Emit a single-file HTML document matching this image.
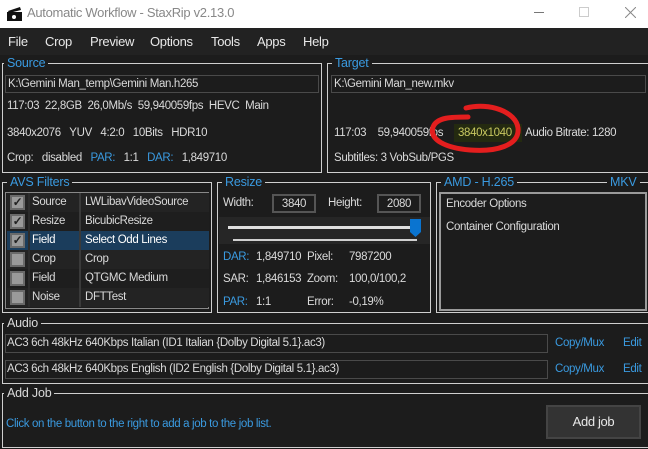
<!DOCTYPE html>
<html><head><meta charset="utf-8"><style>
*{box-sizing:border-box;margin:0;padding:0}
body{width:648px;height:449px;overflow:hidden;background:#1c1c1c;font-family:"Liberation Sans",sans-serif;font-size:11.5px;letter-spacing:-0.35px;color:#dadada;position:relative}
.a{position:absolute;white-space:nowrap}
.b{color:#3a9ae0}
.g{position:absolute;border:1px solid #cfcfcf}
.gt{position:absolute;top:-9px;left:4px;background:#1c1c1c;padding:0 3px;color:#3a9ae0;font-size:12.5px;line-height:16px;letter-spacing:-0.2px}
.tb{position:absolute;border:1px solid #4a4a4a;background:#1c1c1c;padding-left:2px;line-height:16px}
.row{position:absolute;left:1px;width:202px;height:19px;background:#232323}
.cb{position:absolute;left:3px;top:2px;width:15px;height:15px;background:#9a9a9a;border:2px solid #6a6a6a;color:#222;font-size:12px;line-height:11px;text-align:center;font-weight:bold}
.m{position:absolute;top:34px;font-size:13px;color:#e8e8e8;letter-spacing:-0.3px}
</style></head><body>
<div class="a" style="left:0;top:0;width:648px;height:28px;background:#fff"></div>
<svg class="a" style="left:7px;top:7px" width="16" height="14"><rect x="0" y="5" width="15" height="9" fill="#111"/><path d="M1 4 L13 0 L14 3 L2 6Z" fill="#111"/><circle cx="7" cy="10" r="2" fill="#fff"/></svg>
<div class="a" style="left:27px;top:5px;color:#888;font-size:13px;letter-spacing:-0.3px">Automatic Workflow - StaxRip v2.13.0</div>
<div class="a" style="left:534px;top:12px;width:10px;height:1px;background:#777"></div>
<div class="a" style="left:579px;top:7px;width:10px;height:10px;border:1px solid #ccc"></div>
<svg class="a" style="left:625px;top:7px" width="11" height="11"><path d="M0 0L11 11M11 0L0 11" stroke="#888" stroke-width="1"/></svg>
<div class="a" style="left:0;top:28px;width:648px;height:27px;background:#222"></div>
<div class="m" style="left:8px">File</div>
<div class="m" style="left:45px">Crop</div>
<div class="m" style="left:90px">Preview</div>
<div class="m" style="left:150px">Options</div>
<div class="m" style="left:211px">Tools</div>
<div class="m" style="left:257px">Apps</div>
<div class="m" style="left:303px">Help</div>

<div class="g" style="left:2px;top:63px;width:320px;height:110px"><div class="gt" style="left:1px">Source</div>
<div class="tb" style="left:2px;top:11px;width:314px;height:18px">K:\Gemini Man_temp\Gemini Man.h265</div>
<div class="a" style="left:4px;top:36px">117:03 &nbsp;22,8GB &nbsp;26,0Mb/s &nbsp;59,940059fps &nbsp;HEVC &nbsp;Main</div>
<div class="a" style="left:4px;top:63px">3840x2076 &nbsp;&nbsp;YUV &nbsp;&nbsp;4:2:0 &nbsp;&nbsp;10Bits &nbsp;&nbsp;HDR10</div>
<div class="a" style="left:4px;top:88px">Crop: &nbsp;&nbsp;disabled &nbsp;&nbsp;<span class="b">PAR:</span> &nbsp;&nbsp;1:1 &nbsp;&nbsp;<span class="b">DAR:</span> &nbsp;&nbsp;1,849710</div>
</div>

<div class="g" style="left:327px;top:63px;width:330px;height:110px"><div class="gt">Target</div>
<div class="tb" style="left:3px;top:11px;width:315px;height:18px">K:\Gemini Man_new.mkv</div>
<div class="a" style="left:6px;top:63px">117:03 &nbsp;&nbsp;&nbsp;59,940059fps</div>
<div class="a" style="left:126px;top:60px;width:68px;height:18px;background:#242a10"></div>
<div class="a" style="left:130px;top:63px;color:#c8c860">3840x1040</div>
<div class="a" style="left:197px;top:63px">Audio Bitrate: 1280</div>
<div class="a" style="left:6px;top:88px">Subtitles: 3 VobSub/PGS</div>
</div>
<svg class="a" style="left:0;top:0" width="648" height="200"><path d="M466 108 C490 102 516 112 518 128 C520 146 495 152 470 150 C446 148 429 140 433 127 C437 117 452 117 468 117" fill="none" stroke="#e41e1e" stroke-width="5" stroke-linecap="round"/></svg>

<div class="g" style="left:2px;top:182px;width:210px;height:131px"><div class="gt">AVS Filters</div>
<div class="a" style="left:2px;top:9px;width:204px;height:117px;border:1px solid #888;background:#1e1e1e">
<div class="row" style="top:0"><div class="cb">✓</div><span class="a" style="left:25px;top:3px">Source</span><span class="a" style="left:78px;top:3px">LWLibavVideoSource</span></div>
<div class="row" style="top:19px;background:#1e1e1e"><div class="cb">✓</div><span class="a" style="left:25px;top:3px">Resize</span><span class="a" style="left:78px;top:3px">BicubicResize</span></div>
<div class="row" style="top:38px;background:#1b3d5c"><div class="cb">✓</div><span class="a" style="left:25px;top:3px;color:#fff">Field</span><span class="a" style="left:78px;top:3px;color:#fff">Select Odd Lines</span></div>
<div class="row" style="top:57px"><div class="cb"></div><span class="a" style="left:25px;top:3px">Crop</span><span class="a" style="left:78px;top:3px">Crop</span></div>
<div class="row" style="top:76px;background:#1e1e1e"><div class="cb"></div><span class="a" style="left:25px;top:3px">Field</span><span class="a" style="left:78px;top:3px">QTGMC Medium</span></div>
<div class="row" style="top:95px"><div class="cb"></div><span class="a" style="left:25px;top:3px">Noise</span><span class="a" style="left:78px;top:3px">DFTTest</span></div>
<div class="a" style="left:73px;top:0;width:2px;height:114px;background:#3a3a3a"></div>
<div class="a" style="left:22px;top:0;width:2px;height:114px;background:#2c2c2c"></div>
</div></div>

<div class="g" style="left:217px;top:182px;width:214px;height:131px"><div class="gt">Resize</div>
<div class="a" style="left:5px;top:14px">Width:</div>
<div class="tb" style="left:54px;top:11px;width:44px;height:19px;border:2px solid #555;text-align:center;padding:0">3840</div>
<div class="a" style="left:110px;top:14px">Height:</div>
<div class="tb" style="left:159px;top:11px;width:44px;height:19px;border:2px solid #555;text-align:center;padding:0">2080</div>
<div class="a" style="left:1px;top:34px;width:211px;height:27px;background:#262626"></div>
<div class="a" style="left:10px;top:43px;width:190px;height:3px;background:#e0e0e0"></div>
<div class="a" style="left:15px;top:56px;width:184px;height:2px;background:#d0d0d0"></div>
<svg class="a" style="left:192px;top:36px" width="12" height="19"><path d="M0 0H11V13L5.5 18L0 13Z" fill="#0a74d0"/></svg>
<div class="a b" style="left:5px;top:68px">DAR:</div><div class="a" style="left:38px;top:68px">1,849710</div><div class="a" style="left:89px;top:68px">Pixel:</div><div class="a" style="left:131px;top:68px">7987200</div>
<div class="a" style="left:5px;top:90px">SAR:</div><div class="a" style="left:38px;top:90px">1,846153</div><div class="a" style="left:89px;top:90px">Zoom:</div><div class="a" style="left:131px;top:90px">100,0/100,2</div>
<div class="a b" style="left:5px;top:113px">PAR:</div><div class="a" style="left:38px;top:113px">1:1</div><div class="a" style="left:89px;top:113px">Error:</div><div class="a" style="left:131px;top:113px">-0,19%</div>
</div>

<div class="g" style="left:436px;top:182px;width:220px;height:131px"><div class="gt">AMD - H.265</div>
<div class="gt" style="left:170px">MKV</div>
<div class="a" style="left:2px;top:9px;width:208px;height:119px;border:2px solid #9a9a9a"></div>
<div class="a" style="left:9px;top:15px">Encoder Options</div>
<div class="a" style="left:9px;top:38px">Container Configuration</div>
</div>

<div class="g" style="left:2px;top:323px;width:660px;height:61px;border-right:none"><div class="gt" style="left:1px;color:#dadada">Audio</div>
<div class="tb" style="left:2px;top:10px;width:543px;height:19px;padding-left:1px">AC3 6ch 48kHz 640Kbps Italian (ID1 Italian {Dolby Digital 5.1}.ac3)</div>
<div class="a b" style="left:552px;top:13px">Copy/Mux</div><div class="a b" style="left:620px;top:13px">Edit</div>
<div class="tb" style="left:2px;top:36px;width:543px;height:19px;padding-left:1px">AC3 6ch 48kHz 640Kbps English (ID2 English {Dolby Digital 5.1}.ac3)</div>
<div class="a b" style="left:552px;top:39px">Copy/Mux</div><div class="a b" style="left:620px;top:39px">Edit</div>
</div>

<div class="g" style="left:2px;top:393px;width:660px;height:55px;border-right:none"><div class="gt" style="left:1px;color:#dadada">Add Job</div>
<div class="a b" style="left:3px;top:24px">Click on the button to the right to add a job to the job list.</div>
<div class="a" style="left:543px;top:11px;width:95px;height:34px;background:#333;border:2px solid #444;text-align:center;line-height:29px;color:#e8e8e8;font-size:13px">Add job</div>
</div>
</body></html>
